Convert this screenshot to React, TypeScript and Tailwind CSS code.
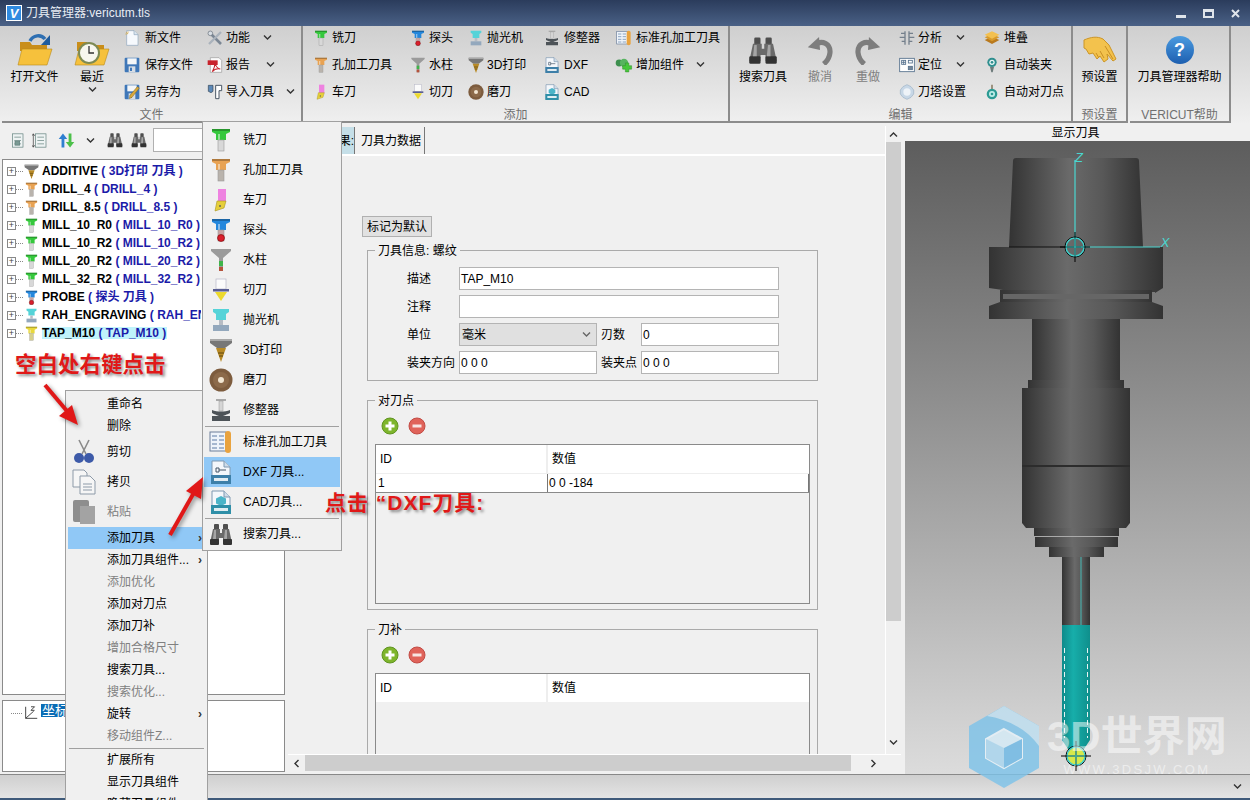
import React from "react";

type Ic = { s?: number };

const Pin = ({ cap, shank = "#d8d8d8", tip, s = 16 }: Ic & { cap: string; shank?: string; tip?: string }) => (
  <svg width={s} height={s} viewBox="0 0 24 24" className="shrink-0">
    <path d="M3 1h18v3l-4 2v6H7V6L3 4z" fill={cap} />
    <path d="M3 1h18v2H3z" fill="#000" opacity="0.25" />
    <path d="M9 6h2v6H9z" fill="#fff" opacity="0.45" />
    <rect x="9" y="12" width="6" height="11" fill={shank} stroke="#9a9a9a" strokeWidth="0.6" />
    {tip && <circle cx="12" cy="20" r="3.5" fill={tip} stroke="#700" strokeWidth="0.6" />}
  </svg>
);
const Mill = ({ s }: Ic) => <Pin s={s} cap="#35c83c" />;
const Drill = ({ s }: Ic) => <Pin s={s} cap="#e8a252" shank="#b9b3ac" />;
const Probe = ({ s }: Ic) => <Pin s={s} cap="#2487dc" shank="#c9a4a4" tip="#d91f2c" />;
const Tap = ({ s }: Ic) => <Pin s={s} cap="#e8d83c" shank="#d6cf8a" />;
const Turn = ({ s = 16 }: Ic) => (
  <svg width={s} height={s} viewBox="0 0 24 24" className="shrink-0">
    <rect x="9" y="1" width="8" height="13" fill="#ee82e0" />
    <path d="M8 13h9l-2 7-9 3z" fill="#e6cf3a" stroke="#a89420" strokeWidth="0.6" />
    <circle cx="11" cy="18" r="1" fill="#665" />
  </svg>
);
const Water = ({ s = 16 }: Ic) => (
  <svg width={s} height={s} viewBox="0 0 24 24" className="shrink-0">
    <path d="M2 1h20v2l-8 7v13h-4V10L2 3z" fill="#9b9b9b" />
    <rect x="10" y="13" width="4" height="5" fill="#3fb44a" />
    <rect x="10" y="19" width="4" height="4" fill="#b5533c" />
  </svg>
);
const Cutter = ({ s = 16 }: Ic) => (
  <svg width={s} height={s} viewBox="0 0 24 24" className="shrink-0">
    <rect x="7" y="1" width="10" height="10" fill="#fbfbfb" stroke="#b8b8c8" strokeWidth="0.7" />
    <rect x="4" y="11" width="16" height="2.5" fill="#5a5f94" />
    <path d="M6 14h12l-6 9z" fill="#ecd92e" />
  </svg>
);
const Polish = ({ s = 16 }: Ic) => (
  <svg width={s} height={s} viewBox="0 0 24 24" className="shrink-0">
    <path d="M4 1h16v3l-3 2v6H7V6L4 4z" fill="#55d3d8" />
    <rect x="10" y="12" width="4" height="5" fill="#b6bcc4" />
    <rect x="4" y="17" width="16" height="6" fill="#93a8bd" />
  </svg>
);
const Print3d = ({ s = 16 }: Ic) => (
  <svg width={s} height={s} viewBox="0 0 24 24" className="shrink-0">
    <path d="M1 1h22v4l-7 5H8L1 5z" fill="#777" />
    <path d="M1 1h22v2H1z" fill="#a8a8a8" />
    <path d="M7 10h10l-5 14z" fill="#b88a26" />
    <path d="M9 15h6M10 18h4" stroke="#5f4710" />
  </svg>
);
const Grind = ({ s = 16 }: Ic) => (
  <svg width={s} height={s} viewBox="0 0 24 24" className="shrink-0">
    <circle cx="12" cy="12" r="11.5" fill="#7d5c3e" />
    <circle cx="12" cy="12" r="8" fill="#8c6a4a" />
    <circle cx="12" cy="12" r="3" fill="#f2e6d2" />
  </svg>
);
const Dresser = ({ s = 16 }: Ic) => (
  <svg width={s} height={s} viewBox="0 0 24 24" className="shrink-0">
    <rect x="7" y="1" width="10" height="2" fill="#aaa" />
    <rect x="10" y="3" width="4" height="10" fill="#d5d5d5" stroke="#999" strokeWidth="0.5" />
    <path d="M3 12c5 2 13 2 18 0v3c-4 2-5 2-7 3h7v5H3v-5h7c-2-1-3-1-7-3z" fill="#4d5358" />
  </svg>
);
const StdHole = ({ s = 16 }: Ic) => (
  <svg width={s} height={s} viewBox="0 0 24 24" className="shrink-0">
    <rect x="1" y="2" width="16" height="19" fill="#eef3fa" stroke="#6d7f9a" />
    <path d="M3 6h5M3 10h5M3 14h5M3 18h5M10 6h5M10 10h5M10 14h5M10 18h5" stroke="#5c7ba5" />
    <rect x="16" y="1" width="6" height="22" rx="3" fill="#e9a33f" />
  </svg>
);
const ListIcon = ({ tall }: { tall?: boolean }) => (
  <svg width={16} height={17} viewBox="0 0 24 24" className="shrink-0" fill="#eef3f3" stroke="#5d7d78">
    <rect x="5" y="2" width="16" height="20" />
    <path d="M8 7h10M8 12h10M8 17h10" />
    {tall ? <path d="M2 2v20M0 5l2-3 2 3M0 19l2 3 2-3" stroke="#333" fill="none" /> : <rect x="9" y="13" width="7" height="6" fill="#7a9a94" />}
  </svg>
);
const FileTag = ({ tag, s = 16, col = "#3d7fa8" }: Ic & { tag: string; col?: string }) => (
  <svg width={s} height={s} viewBox="0 0 24 24" className="shrink-0">
    <path d="M3 1h12l6 6v16H3z" fill="#f4f7fb" stroke="#7e99b2" />
    <path d="M15 1v6h6" fill="#cfdce8" stroke="#7e99b2" />
    {tag === "DXF" ? <path d="M7 8h3v4H7zM10 10h7" fill="none" stroke="#456" /> : <path d="M12 6l5 2.5v5L12 16l-5-2.5v-5z" fill="#4bb4c8" />}
    <rect x="2" y="15" width="20" height="9" fill={col} />
    <rect x="5" y="18" width="14" height="3" fill="#fff" opacity="0.85" />
  </svg>
);
const Binoc = ({ s = 16 }: Ic) => (
  <svg width={s} height={s} viewBox="0 0 24 24" className="shrink-0">
    <rect x="5" y="2" width="5" height="6" rx="1" fill="#4e4e4e" />
    <rect x="14" y="2" width="5" height="6" rx="1" fill="#4e4e4e" />
    <path d="M4 7h7v4h2V7h7l3 14H14v-5h-4v5H1z" fill="#6a6a6a" />
    <rect x="1" y="17" width="9" height="6" rx="1" fill="#333" />
    <rect x="14" y="17" width="9" height="6" rx="1" fill="#333" />
    <path d="M5 8h2v9H4zM16 8h2v9h-3z" fill="#a5a5a5" />
  </svg>
);
const Folder = ({ arrow }: { arrow?: boolean }) => (
  <svg width={36} height={34} viewBox="0 0 36 34">
    <path d="M3 9h10l2 3h15v6H3z" fill="#c98e1a" />
    <path d="M5 16h30l-5 16H1z" fill="#f6c13c" stroke="#b98a1a" strokeWidth="0.6" />
    {arrow ? (
      <>
        <path d="M13 8C16 2 24 1 28 6" fill="none" stroke="#2e6fb2" strokeWidth="3.5" />
        <path d="M33 2v10h-9z" fill="#1f5c9e" />
      </>
    ) : (
      <>
        <circle cx="15" cy="20" r="10" fill="#f7f7ef" stroke="#7d8a54" strokeWidth="2" />
        <path d="M15 13v7h5" fill="none" stroke="#333" strokeWidth="1.3" />
      </>
    )}
  </svg>
);
const NewFile = () => (
  <svg width={16} height={16} viewBox="0 0 24 24" className="shrink-0">
    <path d="M4 1h11l6 6v16H4z" fill="#f6f9fd" stroke="#8ea6bd" />
    <path d="M15 1v6h6" fill="#dbe6f1" stroke="#8ea6bd" />
    <path d="M3 3l3 3M6 2v3M2 6h3" stroke="#d9a83a" />
  </svg>
);
const Floppy = ({ pen }: { pen?: boolean }) => (
  <svg width={16} height={16} viewBox="0 0 24 24" className="shrink-0">
    <rect x="1" y="1" width="22" height="22" rx="1.5" fill="#3f77b8" />
    <rect x="5" y="2" width="14" height="9" fill="#f4f6f8" />
    <rect x="7" y="14" width="10" height="9" fill="#d7dde4" />
    <rect x="9" y="16" width="3" height="5" fill="#3f77b8" />
    {pen && <path d="M23 6L12 20l-4 2 1-5L20 4z" fill="#d9a83a" stroke="#77621e" strokeWidth="0.7" />}
  </svg>
);
const Tools = () => (
  <svg width={16} height={16} viewBox="0 0 24 24" className="shrink-0" fill="none">
    <path d="M3 3l18 18" stroke="#7b8794" strokeWidth="4" />
    <path d="M21 3L3 21" stroke="#aab3bc" strokeWidth="3.4" />
    <circle cx="5" cy="5" r="3.5" fill="#d8dee4" stroke="#66707a" />
  </svg>
);
const Pdf = () => (
  <svg width={16} height={16} viewBox="0 0 24 24" className="shrink-0">
    <path d="M5 1h13l4 4v18H5z" fill="#fbfbfb" stroke="#9a9a9a" />
    <rect x="1" y="5" width="15" height="7" fill="#c8232c" />
    <path d="M8 22c3-5 4-9 4-13 1 5 3 8 8 9-5-1-9 0-12 4z" fill="none" stroke="#c8232c" strokeWidth="1.6" />
  </svg>
);
const ImportTool = () => (
  <svg width={16} height={16} viewBox="0 0 24 24" className="shrink-0" fill="none">
    <path d="M2 2h7v9l-3 2-4-2z" fill="#5c89b8" stroke="#345" />
    <path d="M13 2h9v8h-4v12h-5z" fill="#fff" stroke="#3c4a5a" strokeWidth="1.4" />
  </svg>
);
const Compo = () => (
  <svg width={18} height={16} viewBox="0 0 26 22" className="shrink-0">
    <circle cx="6" cy="8" r="5" fill="#3d8f4e" />
    <circle cx="13" cy="8" r="6" fill="#57b45f" />
    <path d="M15 8h5v4h4v5h-4v4h-5v-4h-4v-5h4z" fill="#46c83a" stroke="#2e8a25" strokeWidth="0.7" />
  </svg>
);
const Analyse = () => (
  <svg width={16} height={16} viewBox="0 0 24 24" className="shrink-0" fill="none" stroke="#75808c" strokeWidth="2">
    <path d="M9 2v20M15 2v20M3 5h6M15 5h6M1 11h8M15 11h8M4 17h5M15 17h5" />
  </svg>
);
const Locate = () => (
  <svg width={16} height={16} viewBox="0 0 24 24" className="shrink-0" fill="none" stroke="#55708c" strokeWidth="1.3">
    <rect x="1" y="2" width="22" height="20" fill="#fff" />
    <rect x="4" y="5" width="6" height="6" />
    <path d="M7 5v6M4 8h6" />
    <rect x="14" y="5" width="6" height="4" />
    <rect x="14" y="14" width="6" height="5" fill="#789" />
  </svg>
);
const Turret = () => (
  <svg width={16} height={16} viewBox="0 0 24 24" className="shrink-0">
    <path d="M12 1l6 3 4 5v6l-4 5-6 3-6-3-4-5V9l4-5z" fill="#c7d7e6" stroke="#9db2c6" />
    <circle cx="12" cy="12" r="5.5" fill="#eef3f8" />
  </svg>
);
const Stack = () => (
  <svg width={16} height={16} viewBox="0 0 24 24" className="shrink-0">
    <path d="M12 10l11 5-11 6-11-6z" fill="#b9791d" />
    <path d="M12 6l11 5-11 6-11-6z" fill="#d99a2a" />
    <path d="M12 2l11 5-11 6-11-6z" fill="#f3c04f" />
  </svg>
);
const AutoClamp = () => (
  <svg width={16} height={16} viewBox="0 0 24 24" className="shrink-0">
    <circle cx="12" cy="8" r="7" fill="#2f8f8f" />
    <circle cx="12" cy="8" r="4" fill="#e8f6f6" />
    <circle cx="12" cy="8" r="2" fill="#2f8f8f" />
    <path d="M9 15h6l-2 8h-2z" fill="#6d7b7b" />
  </svg>
);
const AutoPoint = () => (
  <svg width={16} height={16} viewBox="0 0 24 24" className="shrink-0">
    <path d="M11 1h2v8h-2z" fill="#7a6a4d" />
    <circle cx="12" cy="15" r="8" fill="#2c9b94" />
    <circle cx="12" cy="15" r="4.5" fill="#bfeee9" />
    <circle cx="12" cy="15" r="2" fill="#2c9b94" />
  </svg>
);
const Curved = ({ flip, s = 30 }: Ic & { flip?: boolean }) => (
  <svg width={s} height={s} viewBox="0 0 30 32" className={flip ? "-scale-x-100" : ""}>
    <path d="M19 31C27 24 28 13 21 9 17 7 13 8 10 10" fill="none" stroke="#7d7d7d" strokeWidth="5.5" />
    <path d="M2 13L14 2l1 14z" fill="#7d7d7d" />
  </svg>
);
const Hand = () => (
  <svg width={34} height={28} viewBox="0 0 34 28">
    <path d="M1 4c7-3 13-4 19-1l6 6 7 14-3 2-6-7 1 5-4 3-4-6-3 3-4-6-4 1-3-5-2-1z" fill="#f3c24d" stroke="#cc9526" />
    <path d="M22 10l8 13M17 15l4 7M13 17l3 5" stroke="#c98f26" fill="none" />
  </svg>
);
const PlusDot = () => (
  <svg width={18} height={18} viewBox="0 0 18 18">
    <circle cx="9" cy="9" r="8" fill="#7eb52c" stroke="#5f9420" />
    <path d="M9 4.5v9M4.5 9h9" stroke="#fff" strokeWidth="3" />
  </svg>
);
const MinusDot = () => (
  <svg width={18} height={18} viewBox="0 0 18 18">
    <circle cx="9" cy="9" r="8" fill="#e0635a" stroke="#c24b44" />
    <path d="M4.5 9h9" stroke="#f7e5e3" strokeWidth="3" />
  </svg>
);
const Chev = ({ down = true, c = "#333", cls = "" }: { down?: boolean; c?: string; cls?: string }) => (
  <svg width={9} height={7} viewBox="0 0 9 7" className={`shrink-0 ${cls}`}>
    <path d={down ? "M1 1.5l3.5 3.5L8 1.5" : "M1 5.5L4.5 2 8 5.5"} fill="none" stroke={c} strokeWidth="1.4" />
  </svg>
);

const BigBtn = ({ icon, label, w, dim, chev }: { icon: React.ReactNode; label: string; w: string; dim?: boolean; chev?: boolean }) => (
  <div className={`${w} flex flex-col items-center shrink-0`}>
    <div className="h-[44px] pt-[3px] flex items-center justify-center">{icon}</div>
    <span className={`mt-[1px] whitespace-nowrap ${dim ? "text-[#808080]" : "text-black"}`}>{label}</span>
    {chev && <span className="mt-[3px]"><Chev /></span>}
  </div>
);

const Small = ({ icon, label, chevAt, gap = "gap-[5px]" }: { icon: React.ReactNode; label: string; chevAt?: string; gap?: string }) => (
  <div className={`h-[27px] shrink-0 flex items-center ${gap} whitespace-nowrap`}>
    <span className="w-[16px] flex justify-center">{icon}</span>
    <span>{label}</span>
    {chevAt && <span className={chevAt}><Chev /></span>}
  </div>
);

const Col = ({ w, children }: { w: string; children: React.ReactNode }) => <div className={`${w} shrink-0 flex flex-col -mt-[2px]`}>{children}</div>;

const Group = ({ w, label, children, cls = "" }: { w: string; label: string; children: React.ReactNode; cls?: string }) => (
  <div className={`${w} shrink-0 h-[97px] flex flex-col border-r-2 border-[#8c8c8c] border-b-2`}>
    <div className={`h-[83px] flex ${cls}`}>{children}</div>
    <div className="flex-1 flex items-center justify-center text-[#707070]">{label}</div>
  </div>
);

const Ribbon = () => (
  <div className="h-[98px] flex bg-gradient-to-b from-[#cfcfcf] to-[#f0f0f0] pl-[2px]">
    <Group w="w-[301px]" label="文件">
      <BigBtn w="w-[65px]" icon={<Folder arrow />} label="打开文件" />
      <BigBtn w="w-[50px]" icon={<Folder />} label="最近" chev />
      <div className="w-[7px]" />
      <Col w="w-[83px]">
        <Small icon={<NewFile />} label="新文件" />
        <Small icon={<Floppy />} label="保存文件" />
        <Small icon={<Floppy pen />} label="另存为" />
      </Col>
      <Col w="w-[94px]">
        <Small icon={<Tools />} label="功能" chevAt="ml-[10px]" gap="gap-[3px]" />
        <Small icon={<Pdf />} label="报告" chevAt="ml-[13px]" gap="gap-[3px]" />
        <Small icon={<ImportTool />} label="导入刀具" chevAt="ml-[9px]" gap="gap-[3px]" />
      </Col>
    </Group>
    <Group w="w-[427px]" label="添加" cls="pl-[10px]">
      <Col w="w-[97px]">
        <Small icon={<Mill />} label="铣刀" gap="gap-[3px]" />
        <Small icon={<Drill />} label="孔加工刀具" gap="gap-[3px]" />
        <Small icon={<Turn />} label="车刀" gap="gap-[3px]" />
      </Col>
      <Col w="w-[58px]">
        <Small icon={<Probe />} label="探头" gap="gap-[3px]" />
        <Small icon={<Water />} label="水柱" gap="gap-[3px]" />
        <Small icon={<Cutter />} label="切刀" gap="gap-[3px]" />
      </Col>
      <Col w="w-[76px]">
        <Small icon={<Polish />} label="抛光机" gap="gap-[3px]" />
        <Small icon={<Print3d />} label="3D打印" gap="gap-[3px]" />
        <Small icon={<Grind />} label="磨刀" gap="gap-[3px]" />
      </Col>
      <Col w="w-[72px]">
        <Small icon={<Dresser />} label="修整器" gap="gap-[4px]" />
        <Small icon={<FileTag tag="DXF" />} label="DXF" gap="gap-[4px]" />
        <Small icon={<FileTag tag="CAD" col="#2f8fa8" />} label="CAD" gap="gap-[4px]" />
      </Col>
      <Col w="w-[112px]">
        <Small icon={<StdHole />} label="标准孔加工刀具" gap="gap-[4px]" />
        <Small icon={<Compo />} label="增加组件" chevAt="ml-[8px]" gap="gap-[4px]" />
      </Col>
    </Group>
    <Group w="w-[343px]" label="编辑">
      <BigBtn w="w-[66px]" icon={<Binoc s={30} />} label="搜索刀具" />
      <BigBtn w="w-[48px]" icon={<Curved />} label="撤消" dim />
      <BigBtn w="w-[48px]" icon={<Curved flip />} label="重做" dim />
      <div className="w-[7px]" />
      <Col w="w-[85px]">
        <Small icon={<Analyse />} label="分析" chevAt="ml-[11px]" gap="gap-[3px]" />
        <Small icon={<Locate />} label="定位" chevAt="ml-[11px]" gap="gap-[3px]" />
        <Small icon={<Turret />} label="刀塔设置" gap="gap-[3px]" />
      </Col>
      <Col w="w-[85px]">
        <Small icon={<Stack />} label="堆叠" gap="gap-[4px]" />
        <Small icon={<AutoClamp />} label="自动装夹" gap="gap-[4px]" />
        <Small icon={<AutoPoint />} label="自动对刀点" gap="gap-[4px]" />
      </Col>
    </Group>
    <Group w="w-[55px]" label="预设置">
      <BigBtn w="w-full" icon={<Hand />} label="预设置" />
    </Group>
    <div className="w-[2px]" />
    <Group w="w-[101px]" label="VERICUT帮助">
      <BigBtn
        w="w-full"
        icon={
          <span className="w-[28px] h-[28px] rounded-full bg-gradient-to-b from-[#4b9be0] to-[#1d5fb0] text-white font-bold text-[18px] flex items-center justify-center">?</span>
        }
        label="刀具管理器帮助"
      />
    </Group>
  </div>
);

const tools = [
  { n: "ADDITIVE", d: "3D打印 刀具", i: <Print3d s={15} /> },
  { n: "DRILL_4", d: "DRILL_4", i: <Drill s={15} /> },
  { n: "DRILL_8.5", d: "DRILL_8.5", i: <Drill s={15} /> },
  { n: "MILL_10_R0", d: "MILL_10_R0", i: <Mill s={15} /> },
  { n: "MILL_10_R2", d: "MILL_10_R2", i: <Mill s={15} /> },
  { n: "MILL_20_R2", d: "MILL_20_R2", i: <Mill s={15} /> },
  { n: "MILL_32_R2", d: "MILL_32_R2", i: <Mill s={15} /> },
  { n: "PROBE", d: "探头 刀具", i: <Probe s={15} /> },
  { n: "RAH_ENGRAVING", d: "RAH_ENG", i: <Polish s={15} /> },
  { n: "TAP_M10", d: "TAP_M10", i: <Tap s={15} /> },
];

const TreePanel = () => (
  <div className="w-[285px] shrink-0 flex flex-col pl-[2px] pb-[2px]">
    <div className="h-[35px] flex items-center pl-[3px] pb-[3px] shrink-0">
      <span className="w-[24px] flex justify-center"><ListIcon /></span>
      <span className="w-[22px] flex justify-center"><ListIcon tall /></span>
      <span className="w-[30px] flex justify-center">
        <svg width={17} height={17} viewBox="0 0 24 24"><path d="M7 2l6 8H9v12H5V10H1z" fill="#2f7fd0" /><path d="M17 22l-6-8h4V2h4v12h4z" fill="#4cc04a" /></svg>
      </span>
      <span className="w-[18px] flex justify-center"><Chev /></span>
      <span className="w-[32px] flex justify-center"><Binoc s={16} /></span>
      <span className="w-[16px] flex justify-center"><Binoc s={16} /></span>
      <div className="ml-[6px] w-[60px] h-[24px] bg-white border border-[#b0b0b0]" />
    </div>
    <div className="h-[536px] bg-white border border-[#8a8a8a] overflow-hidden pt-[2px] shrink-0">
      {tools.map((t) => (
        <div key={t.n} className="h-[18px] w-[198px] overflow-hidden flex items-center whitespace-nowrap font-bold">
          <span className="w-[9px] h-[9px] ml-[4px] border border-[#888] bg-white flex items-center justify-center text-[9px] leading-none font-normal text-[#444] shrink-0">+</span>
          <span className="w-[7px] border-t border-dotted border-[#888] mr-[1px] shrink-0" />
          <span className="w-[15px] flex justify-center shrink-0">{t.i}</span>
          <span className={`ml-[3px] pr-[1px] ${t.n === "TAP_M10" ? "bg-[#bff3fb]" : ""}`}>
            {t.n} <span className="text-[#1b1ba8]">( {t.d}{t.n === "RAH_ENGRAVING" ? "" : " )"}</span>
          </span>
        </div>
      ))}
    </div>
    <div className="h-[5px] shrink-0" />
    <div className="flex-1 bg-white border border-[#8a8a8a] flex items-start pt-[3px] pl-[8px] gap-[1px]">
      <span className="w-[11px] mt-[9px] border-t border-dotted border-[#888]" />
      <svg width={16} height={18} viewBox="0 0 18 18" fill="none" stroke="#333">
        <path d="M3 2v13h13M3 15l9-8" />
        <path d="M9 2h4l-4 4h4" />
      </svg>
      <span className="bg-[#0a6cb5] text-white px-[1px] text-[13px] ml-[1px]">坐标系</span>
    </div>
  </div>
);

const Field = ({ v, w = "flex-1" }: { v?: string; w?: string }) => (
  <div className={`${w} h-[23px] bg-white border border-[#b4b4b4] pl-[1px] flex items-center`}>{v}</div>
);

const Box = ({ title, cls, children }: { title: string; cls: string; children: React.ReactNode }) => (
  <div className={`relative border border-[#aaa] ml-[79px] w-[451px] ${cls}`}>
    <span className="absolute left-[7px] -top-[8px] bg-[#f0f0f0] px-[3px] leading-[16px]">{title}</span>
    {children}
  </div>
);

const FormRow = ({ children }: { children: React.ReactNode }) => <div className="flex items-center h-[23px]">{children}</div>;

const PointTable = ({ rows, cls }: { rows: boolean; cls: string }) => (
  <div className={`mx-[7px] border border-[#8a8a8a] ${cls}`}>
    <div className="h-[28px] flex bg-white">
      <div className="w-[172px] pl-[4px] flex items-center border-r-2 border-[#eee]">ID</div>
      <div className="flex-1 pl-[4px] flex items-center">数值</div>
    </div>
    {rows && (
      <div className="h-[20px] flex bg-white border-t border-[#eee] border-b border-b-[#8a8a8a]">
        <div className="w-[172px] pl-[2px] flex items-center border-r border-[#777]">1</div>
        <div className="flex-1 pl-[1px] flex items-center border-r border-[#777]">0 0 -184</div>
      </div>
    )}
  </div>
);

const Center = () => (
  <div className="w-[613px] shrink-0 ml-[3px] flex flex-col h-[650px] pt-[2px]">
    <div className="flex flex-1 min-h-0">
      <div className="flex-1 min-w-0 flex flex-col overflow-hidden">
        <div className="h-[30px] shrink-0 flex items-end border-b-2 border-white pl-[32px]">
          <div className="w-[35px] h-[27px] bg-[#c5dfe8] border-r border-[#777] flex items-center justify-end overflow-hidden whitespace-nowrap">果:</div>
          <div className="h-[27px] px-[3px] ml-[3px] flex items-center border-r border-[#777]">刀具力数据</div>
        </div>
        <div className="h-[60px] shrink-0" />
        <div className="ml-[74px] w-[70px] h-[21px] bg-[#e1e1e1] border border-[#b0b0b0] flex items-center justify-center shrink-0">标记为默认</div>
        <div className="h-[13px] shrink-0" />
        <Box title="刀具信息: 螺纹" cls="h-[131px] shrink-0 pt-[16px] pl-[39px]">
          <div className="flex flex-col gap-[5px] w-[372px]">
            <FormRow><span className="w-[52px]">描述</span><Field v="TAP_M10" /></FormRow>
            <FormRow><span className="w-[52px]">注释</span><Field /></FormRow>
            <FormRow>
              <span className="w-[52px]">单位</span>
              <div className="w-[138px] h-[23px] bg-[#e0e0e0] border border-[#b4b4b4] pl-[2px] pr-[5px] flex items-center justify-between">毫米<Chev c="#666" /></div>
              <span className="w-[44px] pl-[4px]">刃数</span>
              <Field v="0" />
            </FormRow>
            <FormRow>
              <span className="w-[52px]">装夹方向</span>
              <Field v="0 0 0" w="w-[138px]" />
              <span className="w-[44px] pl-[4px]">装夹点</span>
              <Field v="0 0 0" />
            </FormRow>
          </div>
        </Box>
        <div className="h-[19px] shrink-0" />
        <Box title="对刀点" cls="h-[210px] shrink-0 pt-[16px]">
          <div className="flex gap-[9px] pl-[13px] h-[27px]"><PlusDot /><MinusDot /></div>
          <PointTable rows cls="h-[160px]" />
        </Box>
        <div className="h-[19px] shrink-0" />
        <Box title="刀补" cls="h-[200px] shrink-0 pt-[16px]">
          <div className="flex gap-[9px] pl-[13px] h-[27px]"><PlusDot /><MinusDot /></div>
          <PointTable rows={false} cls="h-[160px]" />
        </Box>
      </div>
      <div className="w-[16px] shrink-0 bg-[#f0f0f0] border-l border-white flex flex-col items-center">
        <div className="h-[16px] flex items-center"><Chev down={false} /></div>
        <div className="w-full h-[479px] bg-[#cdcdcd]" />
        <div className="flex-1" />
        <div className="h-[15px] flex items-start"><Chev /></div>
      </div>
    </div>
    <div className="h-[17px] shrink-0 flex items-center bg-[#f0f0f0] border-t border-white mb-[3px]">
      <div className="w-[17px] flex justify-center"><Chev cls="rotate-90" /></div>
      <div className="w-[546px] h-full bg-[#cdcdcd]" />
      <div className="w-[44px] flex justify-center"><Chev cls="-rotate-90" /></div>
    </div>
  </div>
);

const Cyl = ({ x, y, w, h }: { x: number; y: number; w: number; h: number }) => <rect x={x} y={y} width={w} height={h} fill="url(#cyl)" />;

const Cross = ({ cx, cy, fill }: { cx: number; cy: number; fill?: boolean }) => (
  <g fill="none">
    <circle cx={cx} cy={cy} r="10" stroke="#000" strokeWidth="1" />
    <circle cx={cx} cy={cy} r="9" stroke="#3fd0cc" strokeWidth="1.4" fill={fill ? "#d6e84a" : "none"} />
    <path d={`M${cx - 15} ${cy}h30M${cx} ${cy - 15}v30`} stroke="#000" strokeWidth="1" />
    <path d={`M${cx - 9} ${cy}h18M${cx} ${cy - 9}v18`} stroke="#3fd0cc" strokeWidth="1" />
  </g>
);

const Viewport = () => (
  <div className="flex-1 min-w-0 flex flex-col">
    <div className="h-[16px] shrink-0 flex items-center justify-center mt-[1px]">显示刀具</div>
    <div className="flex-1 ml-[4px] bg-gradient-to-b from-[#5d5d5d] via-[#9a9a9a] to-[#dcdcdc] overflow-hidden">
      <svg width={345} height={634} viewBox="905 141 345 634" className="block">
        <defs>
          <linearGradient id="cyl">
            <stop offset="0" stopColor="#333333" />
            <stop offset="0.45" stopColor="#6a6a6a" />
            <stop offset="0.7" stopColor="#585858" />
            <stop offset="1" stopColor="#333333" />
          </linearGradient>
          <linearGradient id="teal">
            <stop offset="0" stopColor="#0e8a8a" />
            <stop offset="0.4" stopColor="#17aeaa" />
            <stop offset="1" stopColor="#0f8f8c" />
          </linearGradient>
        </defs>
        <path d="M1016 158h120q3 0 3 3l4 86h-134l4-86q0-3 3-3z" fill="url(#cyl)" />
        <path d="M989 247h174v41l-8 5v-1h-138l-28-4z" fill="url(#cyl)" />
        <Cyl x={1000} y={290} w={152} h={13} />
        <rect x={1003} y={294} width={146} height={5} fill="#666" />
        <path d="M989 306l11-4h152l11 4v13H989z" fill="url(#cyl)" />
        <Cyl x={1032} y={319} w={88} h={61} />
        <Cyl x={1028} y={380} w={96} h={9} />
        <Cyl x={1022} y={388} w={108} h={78} />
        <rect x={1022} y={465} width={108} height={2} fill="#2c2c2c" />
        <path d="M1022 467h108v56l-4 5h-100l-4-5z" fill="url(#cyl)" />
        <Cyl x={1034} y={528} w={85} h={8} />
        <Cyl x={1035} y={537} w={83} h={10} />
        <Cyl x={1049} y={547} w={55} h={10} />
        <Cyl x={1062} y={557} w={28} h={68} />
        <path d="M1081 557v68" stroke="#3fd0cc" strokeWidth="0.8" />
        <path d="M1062 625h28v115l-8 12h-12l-8-12z" fill="url(#teal)" />
        <path d="M1064.5 648v90M1087.5 648v90" stroke="#e8f4f4" strokeDasharray="5 3" strokeWidth="1" />
        <path d="M1075 160v87h85" fill="none" stroke="#4ad6d0" strokeWidth="1.2" />
        <path d="M1009 247h72" stroke="#111" strokeWidth="1" />
        <Cross cx={1075} cy={247} />
        <Cross cx={1076} cy={756} fill />
        <text x="1079" y="162" fontSize="13" fontStyle="italic" fill="#4ad6d0" textAnchor="middle">Z</text>
        <text x="1165" y="247" fontSize="13" fontStyle="italic" fill="#4ad6d0" textAnchor="middle">X</text>
      </svg>
    </div>
  </div>
);

const Item = ({ icon, label, hi, dim, arrow, h = "h-[22px]" }: { icon?: React.ReactNode; label: string; hi?: boolean; dim?: boolean; arrow?: boolean; h?: string }) => (
  <div className={`${h} flex items-center whitespace-nowrap ${hi ? "bg-[#90c8f6]" : ""} ${dim ? "text-[#808080]" : "text-black"}`}>
    <span className="w-[39px] pr-[8px] flex justify-center shrink-0">{icon}</span>
    <span className="flex-1">{label}</span>
    {arrow && <span className="pr-[3px] text-[#333] font-bold leading-none">›</span>}
  </div>
);

const ContextMenu = () => (
  <div className="absolute left-[65px] top-[390px] w-[143px] bg-[#f0f0f0] border border-[#a0a0a0] pl-[2px] pr-[2px] pt-[2px] z-10">
    <Item label="重命名" />
    <Item label="删除" />
    <Item h="h-[30px]" icon={<svg width={22} height={26} viewBox="0 0 22 26" fill="none"><path d="M6 1l7 14M16 1L9 15" stroke="#8b8b8b" strokeWidth="1.6" /><circle cx="6" cy="19" r="5" fill="#3d5aa8" /><circle cx="16" cy="19" r="5" fill="#3d5aa8" /></svg>} label="剪切" />
    <Item h="h-[30px]" icon={<svg width={24} height={26} viewBox="0 0 24 26" fill="#f6f6f6" stroke="#8d9aa8"><path d="M1 1h11l3 3v14H1z" /><path d="M8 7h10l5 5v13H8z" /><path d="M11 15h9M11 18h9M11 21h9" /></svg>} label="拷贝" />
    <Item h="h-[30px]" dim icon={<svg width={24} height={26} viewBox="0 0 24 26"><rect x="1" y="1" width="16" height="22" rx="2" fill="#8e8e8e" /><rect x="8" y="7" width="15" height="18" fill="#a3a3a3" /></svg>} label="粘贴" />
    <Item hi arrow label="添加刀具" />
    <Item arrow label="添加刀具组件..." />
    <Item dim label="添加优化" />
    <Item label="添加对刀点" />
    <Item label="添加刀补" />
    <Item dim label="增加合格尺寸" />
    <Item label="搜索刀具..." />
    <Item dim label="搜索优化..." />
    <Item arrow label="旋转" />
    <Item dim label="移动组件Z..." />
    <div className="border-t border-[#a0a0a0] mt-[1px] mx-[1px]" />
    <Item label="扩展所有" />
    <Item label="显示刀具组件" />
    <Item label="隐藏刀具组件" />
  </div>
);

const SubItem = ({ icon, label, hi }: { icon: React.ReactNode; label: string; hi?: boolean }) => (
  <div className={`h-[30px] flex items-center whitespace-nowrap ${hi ? "bg-[#90c8f6]" : ""}`}>
    <span className="w-[39px] pr-[5px] flex justify-center shrink-0">{icon}</span>
    <span>{label}</span>
  </div>
);

const SubMenu = () => (
  <div className="absolute left-[202px] top-[121px] w-[140px] bg-[#f0f0f0] border border-[#a0a0a0] px-[1px] pt-[3px] pb-[1px] z-20">
    <SubItem icon={<Mill s={24} />} label="铣刀" />
    <SubItem icon={<Drill s={24} />} label="孔加工刀具" />
    <SubItem icon={<Turn s={24} />} label="车刀" />
    <SubItem icon={<Probe s={24} />} label="探头" />
    <SubItem icon={<Water s={24} />} label="水柱" />
    <SubItem icon={<Cutter s={24} />} label="切刀" />
    <SubItem icon={<Polish s={24} />} label="抛光机" />
    <SubItem icon={<Print3d s={24} />} label="3D打印" />
    <SubItem icon={<Grind s={24} />} label="磨刀" />
    <SubItem icon={<Dresser s={24} />} label="修整器" />
    <div className="border-t border-[#a0a0a0] mt-[1px] mx-[1px]" />
    <SubItem icon={<StdHole s={24} />} label="标准孔加工刀具" />
    <SubItem hi icon={<FileTag tag="DXF" s={24} />} label="DXF 刀具..." />
    <SubItem icon={<FileTag tag="CAD" s={24} col="#2f8fa8" />} label="CAD刀具..." />
    <div className="border-t border-[#a0a0a0] mt-[1px] mx-[1px]" />
    <SubItem icon={<Binoc s={24} />} label="搜索刀具..." />
  </div>
);

const Notes = () => (
  <>
    <span className="absolute left-[15px] top-[351px] z-30 text-[21.5px] leading-[28px] font-bold text-[#e01818] [text-shadow:2px_2px_3px_rgba(0,0,0,0.45)] whitespace-nowrap">空白处右键点击</span>
    <span className="absolute left-[325px] top-[489px] z-30 text-[21px] tracking-[1px] leading-[28px] font-bold text-[#e01818] [text-shadow:2px_2px_3px_rgba(0,0,0,0.45)] whitespace-nowrap">点击 “DXF刀具:</span>
    <svg width={1250} height={800} viewBox="0 0 1250 800" className="absolute left-0 top-0 z-30 pointer-events-none drop-shadow-[2px_2px_2px_rgba(0,0,0,0.4)]">
      <path d="M45 385l27 32" stroke="#e01818" strokeWidth="4" fill="none" />
      <path d="M78 425l-19-9 13-11z" fill="#e01818" />
      <path d="M170 535l26-46" stroke="#e01818" strokeWidth="4" fill="none" />
      <path d="M203 477l-2 22-15-8z" fill="#e01818" />
    </svg>
  </>
);

const Watermark = () => (
  <div className="absolute left-[967px] top-[705px] z-30 flex items-start pointer-events-none">
    <svg width={74} height={84} viewBox="0 0 74 84" className="opacity-80">
      <path d="M37 1l35 20v42L37 83 2 63V21z" fill="#7cc3ea" />
      <path d="M37 1l35 20v20C60 24 40 14 20 11z" fill="#bfe0f2" />
      <path d="M37 24l18 10v19L37 63 19 53V34z" fill="#d5ecf8" stroke="#e8f4fb" strokeWidth="2" />
      <path d="M37 43l18-9v19L37 63z" fill="#6bb8e6" />
      <path d="M37 43L19 34v19l18 10z" fill="#a8d6f0" />
    </svg>
    <div className="ml-[6px] mt-[8px] flex flex-col items-center text-white/50">
      <span className="text-[42px] leading-[48px] font-bold whitespace-nowrap">3D世界网</span>
      <span className="text-[13px] leading-[18px] tracking-[2.3px] whitespace-nowrap">WWW.3DSJW.COM</span>
    </div>
  </div>
);

const App = () => (
  <div className="relative w-[1250px] h-[800px] overflow-hidden bg-[#f0f0f0] text-[12px] leading-none text-black [font-family:'Liberation_Sans','Noto_Sans_CJK_SC',sans-serif] flex flex-col">
    <div className="relative z-[1] h-[26px] shrink-0 flex items-center bg-gradient-to-b from-[#2b3c5c] to-[#4a6186] pl-[6px] pr-[10px]">
      <span className="w-[16px] h-[16px] bg-[#2f8ae0] border border-white text-white font-bold text-[13px] flex items-center justify-center italic">V</span>
      <span className="ml-[4px] text-[#e8edf4]">刀具管理器:vericutm.tls</span>
      <div className="ml-auto flex items-center gap-[17px]">
        <span className="w-[10px] h-[3px] mt-[6px] bg-[#dfe4ea]" />
        <span className="w-[11px] h-[9px] border-2 border-t-[3px] border-[#dfe4ea]" />
        <svg width={9} height={9} viewBox="0 0 9 9"><path d="M1 1l7 7M8 1L1 8" stroke="#dfe4ea" strokeWidth="2" /></svg>
      </div>
    </div>
    <Ribbon />
    <div className="flex h-[650px] shrink-0">
      <TreePanel />
      <Center />
      <Viewport />
    </div>
    <div className="flex-1 bg-gradient-to-b from-[#cfcfcf] to-[#e4e4e4] border-t border-[#888] flex items-center justify-end pr-[8px]">
      <Chev />
    </div>
    <div className="h-[2px] shrink-0 bg-[#3f5a7a]" />
    <ContextMenu />
    <SubMenu />
    <Watermark />
    <Notes />
  </div>
);

export default App;
